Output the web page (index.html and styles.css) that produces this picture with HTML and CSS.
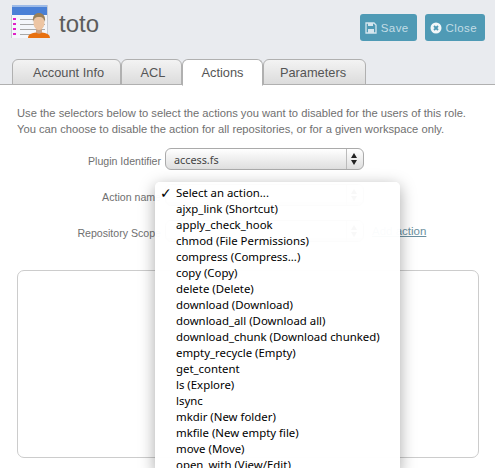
FILE: index.html
```html
<html>
    <head>
        <meta charset="utf-8">
        <link rel="stylesheet" href="styles.css">
    </head>
    <body>
        <div id="header">
            <div id="title">
                <svg class="role-icon" width="40" height="38" viewBox="0 0 40 38">
                    <rect x="1" y="5" width="36" height="33" fill="#f4f6fa"/>
                    <rect x="1" y="5" width="36" height="10" fill="#4a80d6"/>
                    <rect x="1" y="5" width="36" height="2" fill="#9dbbe8"/>
                    <path d="M0.5 15v23M36.5 5v33" stroke="#c8ccd4" fill="none"/>
                    <rect x="2" y="18" width="3" height="2" fill="#e020c8"/>
                    <rect x="2" y="23" width="3" height="2" fill="#e020c8"/>
                    <rect x="2" y="28" width="3" height="2" fill="#e020c8"/>
                    <rect x="2" y="33" width="3" height="2" fill="#e020c8"/>
                    <path d="M9 19.500h25M9 24.500h25M9 29.500h25M9 34.500h20" stroke="#a8a8a8" fill="none"/>
                    <path d="M25 28h6v6h-6z" fill="#c9a184"/>
                    <ellipse cx="28" cy="23" rx="5.500" ry="7" fill="#edc5a3"/>
                    <path d="M22 22c-1-7 3-9 6-9s7 2 6 9c-1-3-2-5-6-5s-5 2-6 5z" fill="#9b8058"/>
                    <path d="M17 38c0-4 4-5 8-5.500 1 1.500 5 1.500 6 0 4 .5 8 1.500 8 5.500z" fill="#e8700f"/>
                </svg>
                <span class="role-name">toto</span>
            </div>
            <div id="buttons">
                <a class="btn">
                    <svg width="12" height="12" viewBox="0 0 12 12"><path d="M1 1h8l2 2v8H1z" fill="none" stroke="#d5e6ee" stroke-width="1.300"/><path d="M3 1h5v3H3zM3 7h6v4H3z" fill="#d5e6ee"/></svg>
                    Save
                </a>
                <a class="btn">
                    <svg width="12" height="12" viewBox="0 0 12 12"><circle cx="6" cy="6" r="5.500" fill="#f2f7f9"/><path d="M4 4l4 4M8 4l-4 4" stroke="#4f9ab5" stroke-width="1.800"/></svg>
                    Close
                </a>
            </div>
        </div>

        <ul id="tabs">
            <li>Account Info</li>
            <li>ACL</li>
            <li class="active">Actions</li>
            <li>Parameters</li>
        </ul>

        <div id="content">
            <p class="intro">Use the selectors below to select the actions you want to disabled for the users of this role. You can choose to disable the action for all repositories, or for a given workspace only.</p>

            <div class="row">
                <label>Plugin Identifier</label>
                <div class="select"><span>access.fs</span><i class="arrows"></i></div>
            </div>
            <div class="row">
                <label>Action name</label>
                <div class="select"><i class="arrows"></i></div>
            </div>
            <div class="row">
                <label>Repository Scope</label>
                <div class="select"><i class="arrows"></i></div>
                <a class="add-link">Add action</a>
            </div>

            <div id="results"></div>
        </div>

        <ul id="menu">
            <li class="checked">Select an action...</li>
            <li>ajxp_link (Shortcut)</li>
            <li>apply_check_hook</li>
            <li>chmod (File Permissions)</li>
            <li>compress (Compress...)</li>
            <li>copy (Copy)</li>
            <li>delete (Delete)</li>
            <li>download (Download)</li>
            <li>download_all (Download all)</li>
            <li>download_chunk (Download chunked)</li>
            <li>empty_recycle (Empty)</li>
            <li>get_content</li>
            <li>ls (Explore)</li>
            <li>lsync</li>
            <li>mkdir (New folder)</li>
            <li>mkfile (New empty file)</li>
            <li>move (Move)</li>
            <li>open_with (View/Edit)</li>
        </ul>
    </body>
</html>
```

FILE: styles.css
```css
html, body {
    height: 100%;
}
body {
    background: #fff;
    color: #707070;
    font-family: "Liberation Sans", sans-serif;
    font-size: 13px;
    margin: 0;
    overflow: hidden;
    position: relative;
}
#header {
    background: #e9ebef;
    display: flex;
        align-items: flex-start;
        justify-content: space-between;
    height: 59px;
    padding-right: 10px;
}
#title {
    display: flex;
        align-items: flex-start;
    padding-left: 11px;
}
.role-icon {
    display: block;
}
.role-name {
    color: #5c5c5c;
    font-size: 24px;
    margin: 10px 0 0 8px;
}
#buttons {
    display: flex;
    gap: 8px;
    padding-top: 14px;
}
.btn {
    background: #4f9ab5;
    border-radius: 3px;
    color: #c3dde6;
    display: flex;
        align-items: center;
        gap: 4px;
    font-size: 11.500px;
    height: 27px;
    letter-spacing: 0.4px;
    padding: 0 8px 0 5px;
}
#tabs {
    background: #e9ebef;
    border-bottom: 1px solid #b0b0b0;
    display: flex;
    height: 25px;
    list-style-type: none;
    margin: 0;
    padding: 0 0 0 12px;
}
#tabs li {
    background: linear-gradient(#f3f3f3, #dcdcdc);
    border: solid 1px #b0b0b0;
    border-radius: 6px 6px 0 0;
    color: #555;
    display: flex;
        align-items: center;
        justify-content: center;
    font-size: 12.800px;
    height: 24px;
}
#tabs li:nth-child(1) { padding-left: 4px; width: 103px; }
#tabs li:nth-child(2) { padding-left: 3px; width: 56px; }
#tabs li:nth-child(3) { width: 79px; }
#tabs li:nth-child(4) { padding-right: 3px; width: 98px; }
#tabs li.active {
    background: #fff;
    border-bottom: solid 1px #fff;
    height: 25px;
}
#content {
    padding: 20px 16px 0 17px;
}
.intro {
    font-size: 11.200px;
    line-height: 16px;
    margin: 0 0 4px;
}
.row {
    display: flex;
        align-items: center;
    height: 36px;
}
.row label {
    font-size: 10.600px;
    padding: 3px 4px 0 0;
    text-align: right;
    width: 144px;
}
.select {
    background: linear-gradient(#fff, #dedede);
    border: solid 1px #aaa;
    border-radius: 6px;
    color: #444;
    display: flex;
        align-items: center;
    font-family: "Noto Sans", sans-serif;
    font-size: 10.800px;
    height: 20px;
    padding-left: 8px;
    position: relative;
    width: 189px;
}
.arrows {
    border-left: solid 1px #bbb;
    height: 20px;
    position: absolute;
    right: 16px;
    top: 0;
}
.arrows::before, .arrows::after {
    border-left: 3px solid transparent;
    border-right: 3px solid transparent;
    content: "";
    left: 4px;
    position: absolute;
}
.arrows::before {
    border-bottom: 5px solid #222;
    top: 4px;
}
.arrows::after {
    border-top: 5px solid #222;
    top: 11px;
}
.add-link {
    color: #6a8fa0;
    font-size: 11.500px;
    margin-left: 8px;
    text-decoration: underline;
}
#results {
    border: solid 1px #ccc;
    border-radius: 7px;
    height: 186px;
    margin-top: 21px;
    width: 460px;
}
#menu {
    background: rgba(255, 255, 255, 0.97);
    border-radius: 5px 5px 0 0;
    box-shadow: 0 4px 16px rgba(0, 0, 0, 0.35);
    color: #000;
    font-family: "Noto Sans", sans-serif;
    font-size: 11.400px;
    height: 286px;
    left: 155px;
    list-style-type: none;
    margin: 0;
    overflow: hidden;
    padding: 3px 0 0 21px;
    position: absolute;
    top: 182px;
    width: 224px;
}
#menu li {
    height: 16px;
    line-height: 16px;
    white-space: nowrap;
}
#menu li.checked::before {
    content: "✓";
    font-family: "DejaVu Sans", sans-serif;
    font-size: 14px;
    font-weight: bold;
    left: 5px;
    position: absolute;
}
```
